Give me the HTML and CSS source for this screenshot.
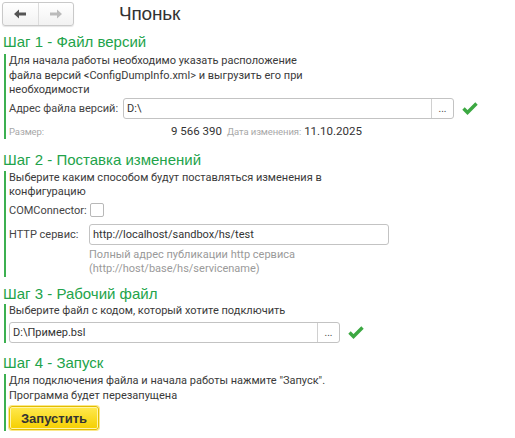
FILE: index.html
```html
<!DOCTYPE html>
<html lang="ru">
<head>
<meta charset="utf-8">
<link rel="stylesheet" href="styles.css">
</head>
<body>
<div class="page">
  <header class="top">
    <div class="nav">
      <button class="nav-btn"><svg width="14" height="10" viewBox="0 0 14 10"><path d="M1 5 L6 0.5 L6 3.5 L13 3.5 L13 6.5 L6 6.5 L6 9.5 Z" fill="#555"/></svg></button>
      <button class="nav-btn"><svg width="14" height="10" viewBox="0 0 14 10"><path d="M13 5 L8 0.5 L8 3.5 L1 3.5 L1 6.5 L8 6.5 L8 9.5 Z" fill="#bbb"/></svg></button>
    </div>
    <h1 class="title">Чпоньк</h1>
  </header>

  <section class="step step-1">
    <h2 class="step-title">Шаг 1 - Файл версий</h2>
    <div class="step-body">
      <p class="text">Для начала работы необходимо указать расположение<br>файла версий &lt;ConfigDumpInfo.xml&gt; и выгрузить его при<br>необходимости</p>
      <div class="row row-file">
        <span class="label label-ver">Адрес файла версий:</span>
        <div class="input input-ver"><span class="val">D:\</span><span class="dots">...</span></div>
        <svg class="check" width="16" height="13" viewBox="0 0 16 13"><path d="M1.5 6.5 L5.5 10.5 L14.5 1.5" fill="none" stroke="#3ca842" stroke-width="3.4"/></svg>
      </div>
      <div class="row row-info">
        <span class="muted muted-size">Размер:</span>
        <span class="num">9 566 390</span>
        <span class="muted muted-date">Дата изменения:</span>
        <span class="date">11.10.2025</span>
      </div>
    </div>
  </section>

  <section class="step step-2">
    <h2 class="step-title">Шаг 2 - Поставка изменений</h2>
    <div class="step-body">
      <p class="text">Выберите каким способом будут поставляться изменения в<br>конфигурацию</p>
      <div class="row row-com">
        <span class="label label-com">COMConnector:</span>
        <span class="checkbox"></span>
      </div>
      <div class="row row-http">
        <span class="label label-http">HTTP сервис:</span>
        <div class="input input-http"><span class="val">http://localhost/sandbox/hs/test</span></div>
      </div>
      <p class="hint">Полный адрес публикации http сервиса<br>(http://host/base/hs/servicename)</p>
    </div>
  </section>

  <section class="step step-3">
    <h2 class="step-title">Шаг 3 - Рабочий файл</h2>
    <div class="step-body">
      <p class="text">Выберите файл с кодом, который хотите подключить</p>
      <div class="row row-work">
        <div class="input input-work"><span class="val">D:\Пример.bsl</span><span class="dots">...</span></div>
        <svg class="check" width="16" height="13" viewBox="0 0 16 13"><path d="M1.5 6.5 L5.5 10.5 L14.5 1.5" fill="none" stroke="#3ca842" stroke-width="3.4"/></svg>
      </div>
    </div>
  </section>

  <section class="step step-4">
    <h2 class="step-title">Шаг 4 - Запуск</h2>
    <div class="step-body">
      <p class="text">Для подключения файла и начала работы нажмите "Запуск".<br>Программа будет перезапущена</p>
      <div class="run-wrap"><button class="run">Запустить</button></div>
    </div>
  </section>
</div>
</body>
</html>
```

FILE: styles.css
```css
* { box-sizing: border-box; }
html, body { margin: 0; padding: 0; background: #fff; }
body { font-family: "Liberation Sans", Arial, sans-serif; color: #333; font-size: 13px; }
.page { padding: 1px 0 0 2px; width: 515px; }
.top { display: flex; align-items: center; height: 25px; }
.nav { display: flex; width: 72px; height: 24px; border: 1px solid #c9c9c9; border-radius: 3px; background: linear-gradient(#fff, #f2f2f2); box-shadow: 0 1px 1px rgba(0,0,0,0.1); }
.nav-btn { flex: 1; border: 0; background: transparent; padding: 0; display: flex; align-items: center; justify-content: center; }
.nav-btn + .nav-btn { border-left: 1px solid #dcdcdc; }
.title { margin: 0 0 0 45px; font-size: 19px; font-weight: normal; color: #333; letter-spacing: -0.2px; }
.step-1 { margin-top: 7px; }
.step-2 { margin-top: 12px; }
.step-3 { margin-top: 8px; }
.step-4 { margin-top: 11px; }
.step-title { margin: 0 0 4px 1px; font-size: 15px; font-weight: normal; color: #22a34a; line-height: 17px; }
.step-2 .step-title { margin-bottom: 3px; }
.step-3 .step-title { margin-bottom: 2px; }
.step-4 .step-title { margin-bottom: 3px; }
.step-body { border-left: 2px solid #3cb050; margin-left: 2px; padding-left: 3px; }
.text { margin: 0; line-height: 14.5px; font-family: Roboto, "Liberation Sans", sans-serif; font-size: 11px; color: #3a3a3a; }
.row { display: flex; align-items: center; font-family: Roboto, "Liberation Sans", sans-serif; font-size: 11px; }
.label { color: #444; white-space: nowrap; }
.input { display: flex; align-items: center; height: 21px; border: 1px solid #c3c3c3; border-radius: 3px; background: #fff; }
.val { flex: 1; padding-left: 3px; color: #333; white-space: nowrap; }
.dots { width: 22px; height: 19px; border-left: 1px solid #d0d0d0; display: flex; align-items: flex-end; justify-content: center; padding-bottom: 4px; font-size: 10px; color: #444; }
.row-file { margin-top: 0; }
.label-ver { width: 114px; }
.input-ver { width: 331px; }
.check { margin-left: 8px; }
.row-info { margin-top: 5px; height: 15px; white-space: nowrap; }
.muted { color: #a8a8a8; font-size: 9.5px; letter-spacing: -0.1px; flex-shrink: 0; }
.muted-size { width: 60px; }
.num { width: 153px; text-align: right; color: #333; font-size: 11.5px; flex-shrink: 0; }
.muted-date { margin-left: 5px; }
.date { margin-left: 3px; color: #333; font-size: 11.5px; }
.row-com { margin-top: 1px; height: 19px; }
.label-com { width: 81px; }
.checkbox { width: 14px; height: 14px; border: 1px solid #b8b8b8; border-radius: 2px; }
.row-http { margin-top: 4px; }
.label-http { width: 80px; }
.input-http { width: 300px; }
.hint { margin: 3px 0 0 80px; line-height: 14px; font-family: Roboto, "Liberation Sans", sans-serif; font-size: 11px; color: #9a9a9a; padding-bottom: 1px; }
.row-work { margin-top: 4px; }
.input-work { width: 331px; }
.run-wrap { padding-top: 3px; padding-bottom: 1px; }
.run { display: block; width: 90px; height: 24px; border: 1px solid #e3bd00; border-radius: 3px; background: linear-gradient(#ffe94f, #f5cf00); box-shadow: 0 0 0 1px #fff4a8 inset, 0 0 0 1px #fbe88a; font-family: "Liberation Sans", Arial, sans-serif; font-size: 13px; font-weight: bold; color: #333; padding: 0; }
```
